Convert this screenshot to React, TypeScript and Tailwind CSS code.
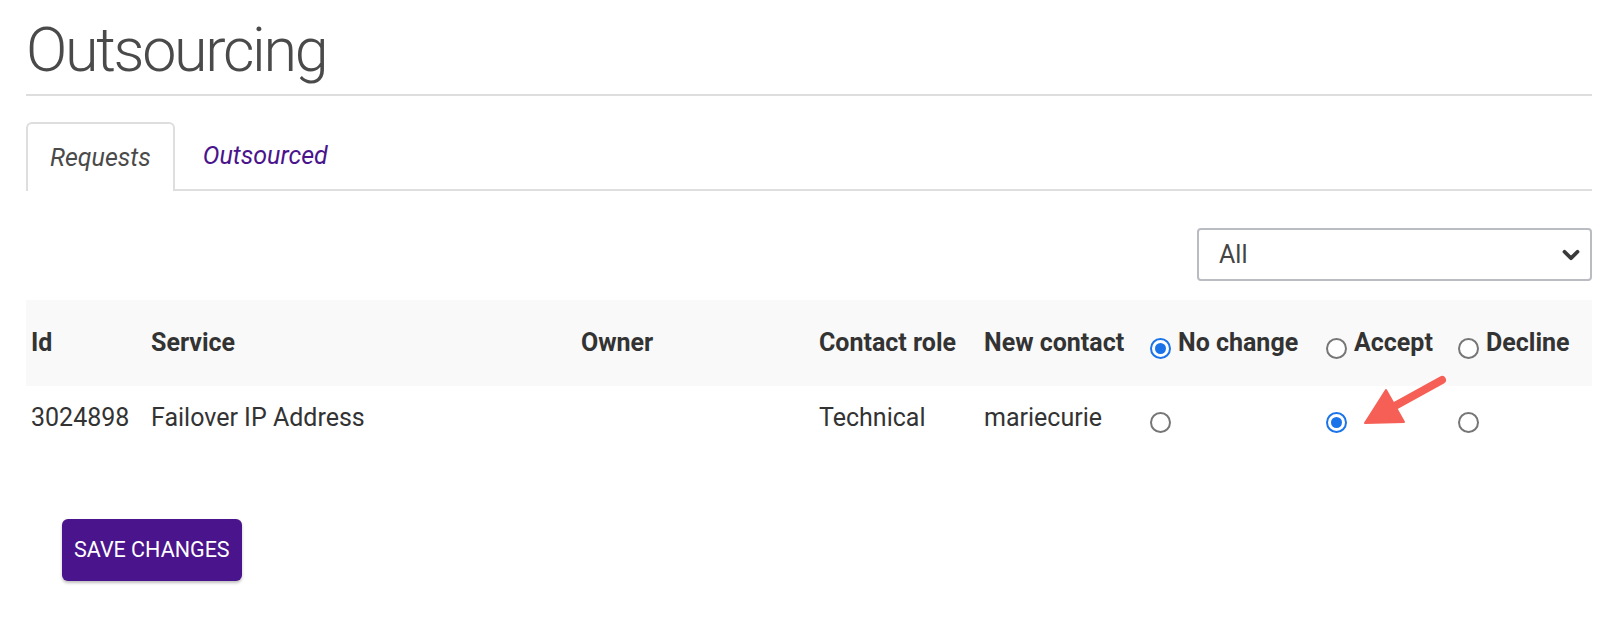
import { ChevronDown } from "lucide-react"

type Choice = "none" | "accept" | "decline"

function Radio({ checked }: { checked?: boolean }) {
  return checked ? (
    <span className="flex h-[21px] w-[21px] shrink-0 items-center justify-center rounded-full border-2 border-[#1a73e8] bg-white">
      <span className="block h-[11px] w-[11px] rounded-full bg-[#1a73e8]" />
    </span>
  ) : (
    <span className="block h-[21px] w-[21px] shrink-0 rounded-full border-2 border-[#767676] bg-white" />
  )
}

const cols = "grid grid-cols-[120px_430px_238px_165px_166px_176px_132px_1fr]"

export default function App() {
  const row = {
    id: "3024898",
    service: "Failover IP Address",
    owner: "",
    role: "Technical",
    contact: "mariecurie",
    choice: "accept" as Choice,
  }

  return (
    <div className="min-h-screen bg-white pl-[26px] pr-[30px] font-['Roboto',sans-serif] text-[#333]">
      <h1 className="pt-[14px] text-[61px] font-light leading-[72px] tracking-[-2.3px] text-[#4a4a4a]">
        Outsourcing
      </h1>
      <div className="mt-[8px] h-[2px] bg-[#dedede]" />

      {/* tabs */}
      <div className="mt-[26px] flex border-b-2 border-[#dedede]">
        <div className="-mb-[2px] rounded-t-[6px] border-2 border-b-0 border-[#dedede] bg-white px-[22px] pb-[18px] pt-[19px] text-[25px] italic leading-[30px] text-[#4a4a4a]">
          Requests
        </div>
        <div className="px-[28px] pb-[18px] pt-[19px] text-[25px] italic leading-[30px] text-[#4a148c]">
          Outsourced
        </div>
      </div>

      <div className="mt-[37px] flex justify-end">
        <div className="flex h-[53px] w-[395px] items-center justify-between rounded-[4px] border-2 border-[#b9bcc0] pl-[20px] pr-[6px] text-[25px] text-[#444]">
          <span>All</span>
          <ChevronDown size={26} strokeWidth={3.5} className="text-[#3a3a3a]" />
        </div>
      </div>

      {/* table */}
      <div className="relative mt-[19px]">
        <div className={`${cols} h-[86px] items-center bg-[#f9f9f9] text-[25px] font-bold`}>
          <div className="pl-[5px]">Id</div>
          <div className="pl-[5px]">Service</div>
          <div className="pl-[5px]">Owner</div>
          <div className="pl-[5px]">Contact role</div>
          <div className="pl-[5px]">New contact</div>
          <div className="flex items-center gap-[7px] pl-[5px]">
            <span className="mt-[10px]"><Radio checked /></span>
            No change
          </div>
          <div className="flex items-center gap-[7px] pl-[5px]">
            <span className="mt-[10px]"><Radio /></span>
            Accept
          </div>
          <div className="flex items-center gap-[7px] pl-[5px]">
            <span className="mt-[10px]"><Radio /></span>
            Decline
          </div>
        </div>

        <div className={`${cols} h-[64px] items-center text-[25px]`}>
          <div className="pl-[5px]">{row.id}</div>
          <div className="pl-[5px]">{row.service}</div>
          <div className="pl-[5px]">{row.owner}</div>
          <div className="pl-[5px]">{row.role}</div>
          <div className="pl-[5px]">{row.contact}</div>
          <div className="mt-[8px] pl-[5px]"><Radio checked={row.choice === "none"} /></div>
          <div className="mt-[8px] pl-[5px]"><Radio checked={row.choice === "accept"} /></div>
          <div className="mt-[8px] pl-[5px]"><Radio checked={row.choice === "decline"} /></div>
        </div>

        {/* annotation arrow */}
        <svg
          className="pointer-events-none absolute left-[1329px] top-[70px]"
          width="95"
          height="60"
          viewBox="0 0 95 60"
        >
          <line x1="87" y1="10" x2="38" y2="37" stroke="#f65f56" strokeWidth="8" strokeLinecap="round" />
          <polygon points="10,53 31,20 49,52" fill="#f65f56" stroke="#f65f56" strokeWidth="2" strokeLinejoin="round" />
        </svg>
      </div>

      <button className="ml-[36px] mt-[69px] h-[62px] rounded-[6px] bg-[#4a148c] px-[12px] text-[21.5px] uppercase text-white shadow-[0_2px_3px_rgba(0,0,0,0.25)]">
        Save changes
      </button>
    </div>
  )
}
